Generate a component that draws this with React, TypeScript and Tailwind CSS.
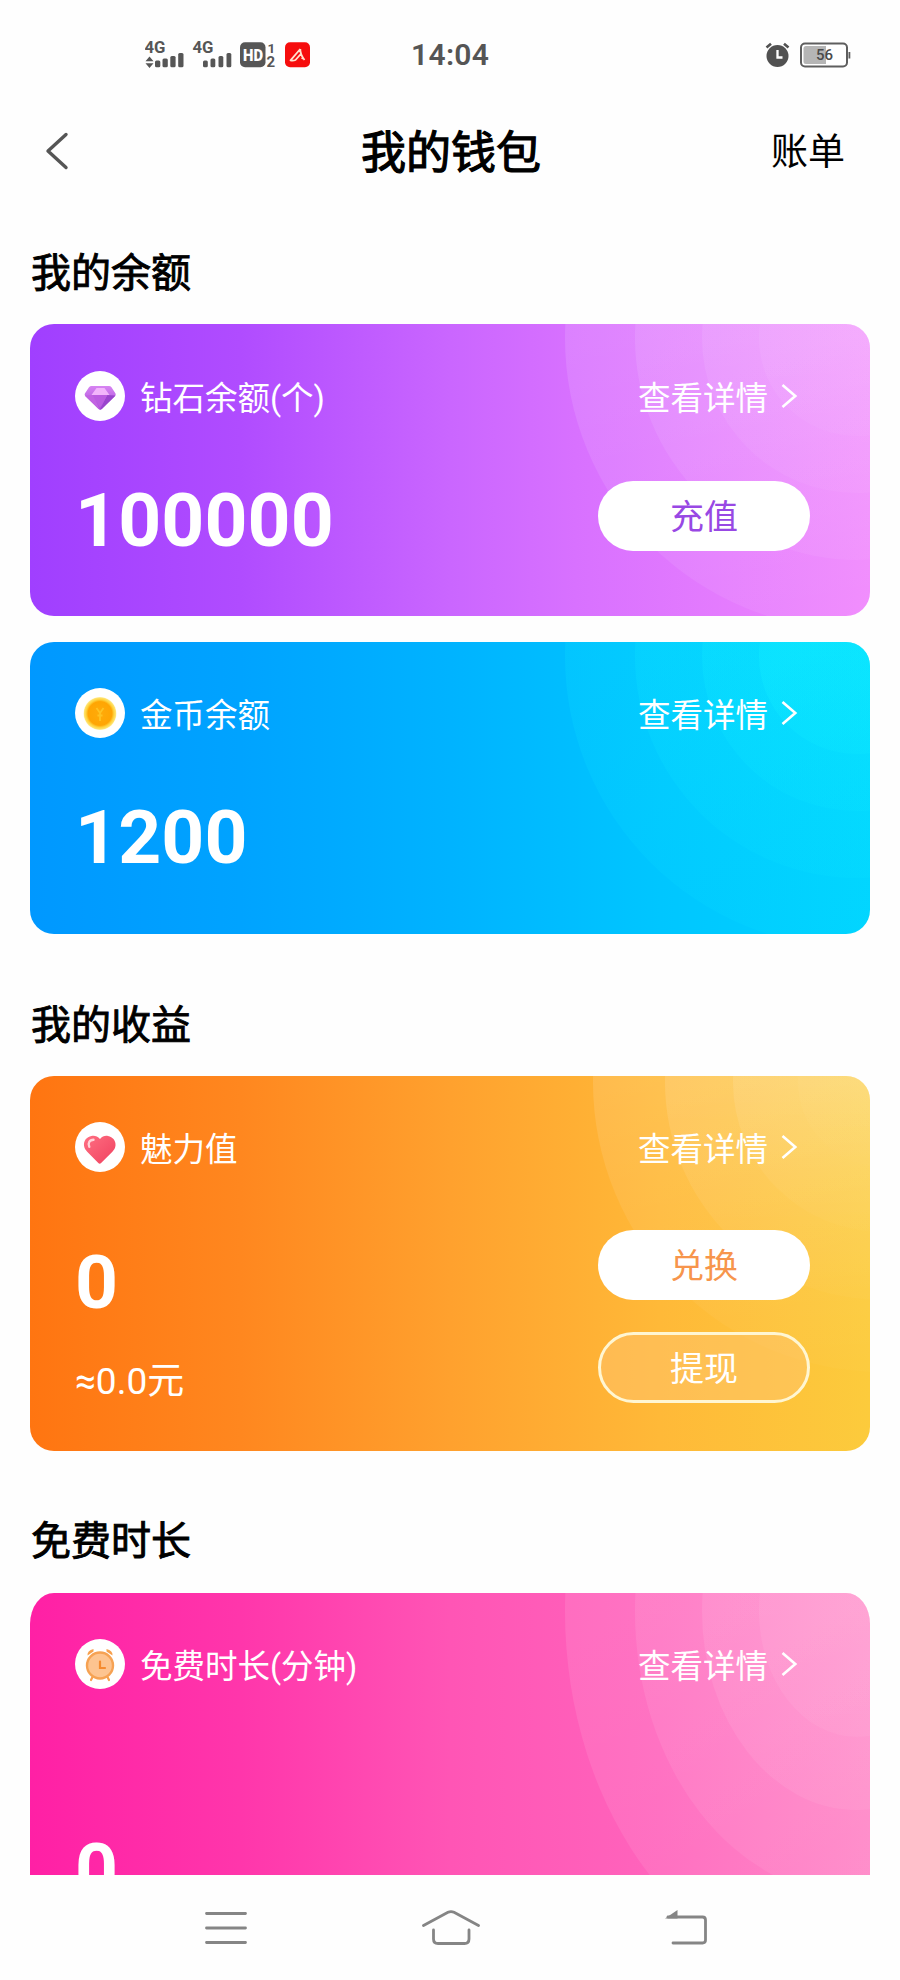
import React from "react";

type Theme = "purple" | "blue" | "orange" | "pink";

type Ring = { r: number; opacity: number };

const THEMES: Record<
  Theme,
  {
    stops: [string, string][];
    cx: number;
    cy: number;
    ringColor: string;
    fade: number; // how much of a ring is left at its lower edge
    rings: Ring[];
  }
> = {
  purple: {
    stops: [
      ["0", "#a03fff"],
      ["0.25", "#b04cff"],
      ["0.5", "#ca66ff"],
      ["0.65", "#d871ff"],
      ["1", "#f086fd"],
    ],
    cx: 827,
    cy: 14,
    ringColor: "#fff",
    fade: 0.5,
    rings: [
      { r: 292, opacity: 0.12 },
      { r: 222, opacity: 0.1 },
      { r: 155, opacity: 0.08 },
      { r: 98, opacity: 0.06 },
    ],
  },
  blue: {
    stops: [
      ["0", "#0098ff"],
      ["0.25", "#00a3ff"],
      ["0.5", "#00b3ff"],
      ["0.75", "#00c6ff"],
      ["1", "#00d3ff"],
    ],
    cx: 827,
    cy: 14,
    ringColor: "#14f4ff",
    fade: 0.5,
    rings: [
      { r: 292, opacity: 0.14 },
      { r: 222, opacity: 0.15 },
      { r: 155, opacity: 0.18 },
      { r: 98, opacity: 0.26 },
    ],
  },
  orange: {
    stops: [
      ["0", "#ff7511"],
      ["0.25", "#ff871f"],
      ["0.5", "#ffa12e"],
      ["0.75", "#ffb938"],
      ["1", "#fccb3c"],
    ],
    cx: 853,
    cy: 6,
    ringColor: "#fff",
    fade: 0.15,
    rings: [
      { r: 290, opacity: 0.12 },
      { r: 218, opacity: 0.12 },
      { r: 150, opacity: 0.1 },
      { r: 85, opacity: 0.03 },
    ],
  },
  pink: {
    stops: [
      ["0", "#ff20a5"],
      ["0.25", "#ff36ab"],
      ["0.5", "#ff55b5"],
      ["0.75", "#ff64bc"],
      ["1", "#ff7cc2"],
    ],
    cx: 827,
    cy: 14,
    ringColor: "#fff",
    fade: 0.7,
    rings: [
      { r: 292, opacity: 0.1 },
      { r: 222, opacity: 0.09 },
      { r: 155, opacity: 0.09 },
      { r: 98, opacity: 0.07 },
    ],
  },
};

// Gradient + concentric rings, stretched to whatever height the card has
const CardBackground: React.FC<{ theme: Theme; viewHeight: number }> = ({
  theme,
  viewHeight,
}) => {
  const { stops, cx, cy, ringColor, fade, rings } = THEMES[theme];
  return (
    <svg
      className="absolute inset-0 h-full w-full"
      viewBox={`0 0 840 ${viewHeight}`}
      preserveAspectRatio="none"
    >
      <defs>
        <linearGradient id={`bg-${theme}`} x1="0" x2="1" y1="0" y2="0">
          {stops.map(([offset, color]) => (
            <stop key={offset} offset={offset} stopColor={color} />
          ))}
        </linearGradient>
        <linearGradient id={`ring-${theme}`} x1="0" x2="0" y1="0.5" y2="1">
          <stop offset="0" stopColor={ringColor} />
          <stop offset="1" stopColor={ringColor} stopOpacity={fade} />
        </linearGradient>
      </defs>
      <rect width="840" height={viewHeight} fill={`url(#bg-${theme})`} />
      {rings.map(({ r, opacity }) => (
        <circle
          key={r}
          cx={cx}
          cy={cy}
          r={r}
          fill={`url(#ring-${theme})`}
          fillOpacity={opacity}
        />
      ))}
    </svg>
  );
};

const DiamondIcon = () => (
  <svg className="size-[50px]" viewBox="0 0 50 50">
    <defs>
      <linearGradient id="gem" x1="0" x2="0" y1="0" y2="1">
        <stop offset="0" stopColor="#d784f2" />
        <stop offset="1" stopColor="#a54ad8" />
      </linearGradient>
    </defs>
    <circle cx="25" cy="25" r="25" fill="#fff" />
    <path
      d="M16.500 15h17.500q1.500 0 2.500 1.200l4 6.300q.7 1.300-.4 2.600L26.800 38q-1.600 1.500-3.200 0L10.200 25.100q-1-1.300-.3-2.600l4.100-6.300q1-1.200 2.500-1.200z"
      fill="url(#gem)"
    />
    <path d="M10 24.500l8-.5 7 14.800-1.400-.8L10.200 25.100z" fill="#c263e2" />
    <path d="M40.300 24.500l-8.300-.5-7 14.800 1.800-.8 13.300-12.900z" fill="#9a45cd" />
    <path d="M16.500 24l5-7h8l5 7z" fill="#f2b5fb" />
    <path d="M17.500 24h15l-7.500 13z" fill="#bb5de0" />
  </svg>
);

const CoinIcon = () => (
  <svg className="size-[50px]" viewBox="0 0 50 50">
    <defs>
      <radialGradient id="coin">
        <stop offset="0" stopColor="#ffab0a" />
        <stop offset="0.72" stopColor="#ffa503" />
        <stop offset="0.84" stopColor="#ffd13c" />
        <stop offset="0.95" stopColor="#ffe26b" />
        <stop offset="1" stopColor="#fff3bd" />
      </radialGradient>
    </defs>
    <circle cx="25" cy="25" r="25" fill="#fff" />
    <circle cx="25" cy="25.500" r="16.500" fill="url(#coin)" />
    <path
      d="M21.500 20l3.500 5 3.500-5M25 25v8M22.500 27.500h5"
      fill="none"
      stroke="#ffc222"
      strokeWidth="1.800"
    />
  </svg>
);

const HeartIcon = () => (
  <svg className="size-[50px]" viewBox="0 0 50 50">
    <defs>
      <linearGradient id="heart" x1="0" x2="1" y1="0" y2="1">
        <stop offset="0" stopColor="#ff6f82" />
        <stop offset="1" stopColor="#f0415f" />
      </linearGradient>
    </defs>
    <circle cx="25" cy="25" r="25" fill="#fff" />
    <path
      d="M25 17C22.500 14.300 19.500 13.300 16.500 14c-5 .8-8 5-7.500 9.500.2 2.500 1.500 4.500 3.200 6.200L23.300 41q1.400 1.300 2.800 0l11.300-11.300c1.700-1.700 2.900-3.700 3.100-6.200.5-4.500-2.700-8.700-7.500-9.500-3-.5-5.800.3-8 3z"
      fill="url(#heart)"
    />
    <path
      d="M18.500 17.800c-4 0-6 3.500-4.200 7"
      fill="none"
      stroke="#ffd3d8"
      strokeWidth="2.400"
      strokeLinecap="round"
    />
  </svg>
);

const ClockIcon = () => (
  <svg className="size-[50px]" viewBox="0 0 50 50">
    <circle cx="25" cy="25" r="25" fill="#fff" />
    <path
      d="M17.500 38l-1.500 3M32.500 38l1.500 3"
      fill="none"
      stroke="#f7a04e"
      strokeWidth="2.200"
      strokeLinecap="round"
    />
    <path d="M12.500 16.500q-.5-5 6-6.500v2.500z" fill="#f7a04e" />
    <path d="M37.500 16.500q.5-5-6-6.500v2.500z" fill="#f7a04e" />
    <circle cx="25" cy="26.500" r="13" fill="#fdc490" stroke="#f6a253" strokeWidth="2.400" />
    <path
      d="M25 22.500v6.500h5"
      fill="none"
      stroke="#f58b2f"
      strokeWidth="2.200"
      strokeLinecap="round"
    />
  </svg>
);

const StatusBar = () => (
  <div className="flex h-[110px] items-center pl-[145px] pr-[49px]">
    <svg className="h-[30px] w-[168px]" viewBox="0 0 168 30" fontFamily="Roboto, sans-serif">
      <g fill="#565656">
        <text x="-0.500" y="13.200" fontSize="16.500" fontWeight="700" textLength="21" lengthAdjust="spacingAndGlyphs">
          4G
        </text>
        <path d="M4.500 16.500l4 4.700h-8zM4.500 28l4-4.700h-8z" />
        <rect x="10" y="20.500" width="5.300" height="6.700" rx="1.500" />
        <rect x="17.500" y="18.500" width="5.300" height="8.700" rx="1.500" />
        <rect x="25.300" y="16" width="5.300" height="11.200" rx="1.500" />
        <rect x="33.200" y="13" width="5.300" height="14.200" rx="1.500" />
        <text x="47.500" y="13.200" fontSize="16.500" fontWeight="700" textLength="21" lengthAdjust="spacingAndGlyphs">
          4G
        </text>
        <rect x="58" y="20.500" width="4.800" height="6.700" rx="1.500" />
        <rect x="65.500" y="18.500" width="4.800" height="8.700" rx="1.500" />
        <rect x="73.500" y="16" width="4.800" height="11.200" rx="1.500" />
        <rect x="81.500" y="13" width="4.800" height="14.200" rx="1.500" />
        <rect x="95" y="2.300" width="25.500" height="25" rx="5" />
        <text x="122.500" y="12.500" fontSize="13.500" fontWeight="700">
          1
        </text>
        <text x="121.500" y="27.300" fontSize="15" fontWeight="700">
          2
        </text>
      </g>
      <text
        x="98"
        y="20.800"
        fontSize="16"
        fontWeight="900"
        fill="#fff"
        textLength="20"
        lengthAdjust="spacingAndGlyphs"
      >
        HD
      </text>
      <rect x="140" y="2.200" width="25" height="25" rx="5" fill="#f60d0d" />
      <path
        d="M155.300 9L145.500 20.300q2.500.7 5-.3l5.300-6M155.300 9q-.3 5 4.200 11M156.500 18l2.500 1"
        fill="none"
        stroke="#ffe3cf"
        strokeWidth="1.800"
        strokeLinejoin="round"
      />
    </svg>
    <div className="ml-[98px] text-[30px] leading-none font-semibold tracking-[0.3px] text-[#555]">
      14:04
    </div>
    <div className="ml-auto flex items-center gap-[10px]">
      <svg className="h-[26px] w-[25px]" viewBox="0 0 25 26">
        <circle cx="12.500" cy="14" r="11" fill="#515151" />
        <path d="M1.500 5.500L6 1.700M23.500 5.500L19 1.700" stroke="#515151" strokeWidth="2.600" />
        <path d="M12.500 8v7.500h5" fill="none" stroke="#fff" strokeWidth="2.300" />
      </svg>
      <svg className="h-[26px] w-[51px]" viewBox="0 0 51 26" fontFamily="Roboto, sans-serif">
        <rect x="1" y="1.500" width="46" height="23" rx="4" fill="#fff" stroke="#5e5e5e" strokeWidth="2" />
        <path d="M6 4h20v18H6q-2.500 0-2.500-2.500v-13Q3.500 4 6 4z" fill="#b5b5b5" />
        <rect x="48.500" y="10" width="1.800" height="6.500" fill="#5e5e5e" />
        <text x="24.500" y="18.300" fontSize="15" fontWeight="500" textAnchor="middle" fill="#4a4a4a">
          56
        </text>
      </svg>
    </div>
  </div>
);

const Header = () => (
  <header className="grid h-[82px] grid-cols-3 items-center text-black">
    <button className="ml-[44px] w-fit">
      <svg className="h-[38px] w-[25px]" viewBox="0 0 25 38">
        <path
          d="M22 2.500L4 19l18 16.500"
          fill="none"
          stroke="#555"
          strokeWidth="3.400"
          strokeLinecap="round"
          strokeLinejoin="round"
        />
      </svg>
    </button>
    <h1 className="mt-1 ml-[2px] text-center text-[45px] leading-none whitespace-nowrap [-webkit-text-stroke:1.2px_#000]">
      我的钱包
    </h1>
    <button className="mt-[3px] mr-[55px] justify-self-end text-[37px] leading-none">账单</button>
  </header>
);

const SectionTitle: React.FC<{ children: React.ReactNode }> = ({ children }) => (
  <h2 className="mb-6 flex h-14 items-center pt-1 pl-px text-[40px] leading-none text-black [-webkit-text-stroke:0.9px_#000]">
    {children}
  </h2>
);

const CardHeader: React.FC<{ icon: React.ReactNode; label: string }> = ({ icon, label }) => (
  <div className="flex h-[50px] items-center">
    {icon}
    <span className="mt-[6px] ml-[15px] text-[32.5px] leading-none">{label}</span>
    <button className="ml-auto flex items-center">
      <span className="mt-[6px] text-[32.5px] leading-none">查看详情</span>
      <svg className="mr-[2px] ml-3 h-7 w-[18px]" viewBox="0 0 18 28">
        <path d="M2.500 3L15.300 14 2.500 25" fill="none" stroke="#fff" strokeWidth="2.600" />
      </svg>
    </button>
  </div>
);

const Amount: React.FC<{ children: React.ReactNode }> = ({ children }) => (
  <div className="text-[75px] leading-[80px] font-bold tracking-[0.1px]">{children}</div>
);

const WalletPage: React.FC = () => (
  <div className="h-[1980px] w-[900px] overflow-hidden bg-[#fefefe] font-[Roboto,'Noto_Sans_CJK_SC',sans-serif]">
    <div className="h-[1875px] overflow-hidden">
      <StatusBar />
      <Header />
      <main className="px-[30px] text-white">
        <section className="mt-[52px]">
          <SectionTitle>我的余额</SectionTitle>
          <div className="relative h-[292px] overflow-hidden rounded-3xl">
            <CardBackground theme="purple" viewHeight={292} />
            <div className="relative pt-[47px] pr-[70px] pl-[45px]">
              <CardHeader icon={<DiamondIcon />} label="钻石余额(个)" />
              <div className="mt-[59px] flex items-start justify-between">
                <Amount>100000</Amount>
                <button className="mt-px -mr-[10px] h-[70px] w-[212px] rounded-full bg-white pt-[2px] text-[34px] leading-none text-[#9848e4]">
                  充值
                </button>
              </div>
            </div>
          </div>
          <div className="relative mt-[26px] h-[292px] overflow-hidden rounded-3xl">
            <CardBackground theme="blue" viewHeight={292} />
            <div className="relative pt-[46px] pr-[70px] pl-[45px]">
              <CardHeader icon={<CoinIcon />} label="金币余额" />
              <div className="mt-[59px]">
                <Amount>1200</Amount>
              </div>
            </div>
          </div>
        </section>

        <section className="mt-[62px]">
          <SectionTitle>我的收益</SectionTitle>
          <div className="relative h-[375px] overflow-hidden rounded-3xl">
            <CardBackground theme="orange" viewHeight={375} />
            <div className="relative pt-[46px] pr-[70px] pl-[45px]">
              <CardHeader icon={<HeartIcon />} label="魅力值" />
              <div className="mt-[58px] flex items-start justify-between">
                <div className="pt-3">
                  <Amount>0</Amount>
                  <p className="mt-10 text-[37px] leading-[40px]">≈0.0元</p>
                </div>
                <div className="-mr-[10px] flex flex-col gap-8">
                  <button className="h-[70px] w-[212px] rounded-full bg-white pt-[2px] text-[34px] leading-none text-[#f7954c]">
                    兑换
                  </button>
                  <button className="h-[71px] w-[212px] rounded-full border-[3px] border-[#fff6d2] bg-[#ffc676]/45 pt-[2px] text-[34px] leading-none">
                    提现
                  </button>
                </div>
              </div>
            </div>
          </div>
        </section>

        <section className="mt-[61px]">
          <SectionTitle>免费时长</SectionTitle>
          <div className="relative mt-[25px] h-[375px] overflow-hidden rounded-[24px/31px]">
            <CardBackground theme="pink" viewHeight={292} />
            <div className="relative pt-[46px] pr-[70px] pl-[45px]">
              <CardHeader icon={<ClockIcon />} label="免费时长(分钟)" />
              <div className="mt-[141px]">
                <Amount>0</Amount>
              </div>
            </div>
          </div>
        </section>
      </main>
    </div>

    <nav className="flex h-[105px] items-center pl-[205px]">
      <svg className="h-9 w-[42px]" viewBox="0 0 42 36">
        <path
          d="M1.500 3.500h39M1.500 18h39M1.500 32.500h39"
          stroke="#858585"
          strokeWidth="2.800"
          strokeLinecap="round"
        />
      </svg>
      <svg className="ml-[175px] h-9 w-[58px]" viewBox="0 0 58 36">
        <path
          d="M1.500 15.500L26 2.300q3-1.500 6 0l24.500 13.200M11.500 20v9q0 4.500 4.500 4.500h26.500q4.500 0 4.500-4.500v-9"
          fill="none"
          stroke="#858585"
          strokeWidth="2.800"
          strokeLinecap="round"
        />
      </svg>
      <svg className="ml-[185px] h-9 w-[42px]" viewBox="0 0 42 36">
        <path d="M0 8.500L12.500 0v8.500z" fill="#858585" />
        <path
          d="M3 7h34.500q3 0 3 3v20q0 3-3 3H8"
          fill="none"
          stroke="#858585"
          strokeWidth="2.800"
          strokeLinecap="round"
        />
      </svg>
    </nav>
  </div>
);

export default WalletPage;
